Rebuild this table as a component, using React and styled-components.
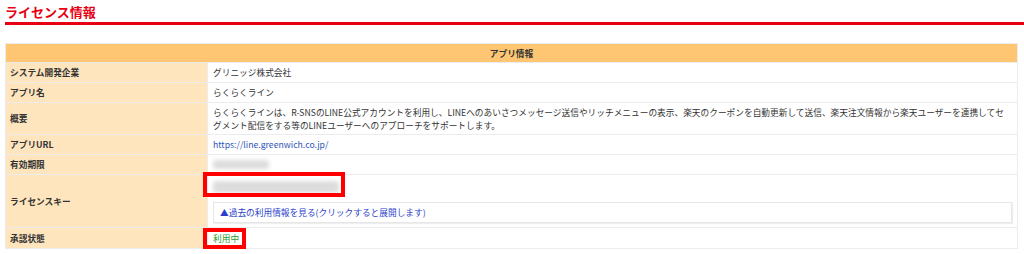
import React from 'react';
import styled, { createGlobalStyle } from 'styled-components';

const GlobalStyle = createGlobalStyle`
  body {
    margin: 0;
    background: #fff;
    font-family: "Noto Sans CJK JP", "Noto Sans", sans-serif;
    color: #333;
  }
`;

const Page = styled.div`
  width: 1024px;
  height: 254px;
  padding: 5px 0 0 5px;
  box-sizing: border-box;
  overflow: hidden;
`;

const Title = styled.h2`
  margin: 0;
  height: 17px;
  padding-bottom: 0;
  font-size: 13px;
  line-height: 14px;
  font-weight: bold;
  color: #e60012;
  border-bottom: 3px solid #e60012;
`;

const Table = styled.div`
  margin-top: 18px;
  width: 1013px;
  display: grid;
  grid-template-columns: 201px 1fr;
  gap: 1px;
  padding: 1px;
  box-sizing: border-box;
  background: #ececec;
  font-size: 8.7px;
  line-height: 13px;
`;

const Header = styled.div`
  grid-column: 1 / 3;
  height: 18px;
  background: #fec673;
  font-weight: bold;
  text-align: center;
  display: flex;
  align-items: center;
  justify-content: center;
`;

const Label = styled.div`
  background: #fee5bd;
  font-weight: bold;
  padding: 0 4px;
  min-height: ${p => p.h || 19}px;
  display: flex;
  align-items: center;
`;

const Value = styled.div`
  position: relative;
  background: #fff;
  padding: 0 5px;
  min-height: ${p => p.h || 19}px;
  display: flex;
  flex-direction: column;
  justify-content: center;
  color: ${p => p.color || '#333'};
`;

const Link = styled.a`
  color: #2c56b8;
  text-decoration: none;
`;

const Blur = styled.div`
  width: ${p => p.w}px;
  height: ${p => p.h}px;
  background: #dcdcdc;
  filter: blur(2px);
  border-radius: 3px;
`;

const KeyWrap = styled.div`
  padding-top: 5px;
`;

const History = styled.div`
  margin-top: 9px;
  margin-bottom: 3px;
  height: 19px;
  border: 1px solid #e6e6e6;
  box-shadow: 1px 1px 1px #eee;
  padding: 0 6px;
  display: flex;
  align-items: center;
  color: #2c3fcc;
  cursor: pointer;
`;

const Marker = styled.div`
  position: absolute;
  left: -5px;
  top: ${p => p.top}px;
  width: ${p => p.w}px;
  height: ${p => p.h}px;
  border: 4px solid #ff0000;
  box-sizing: border-box;
`;

export default function App() {
  return (
    <Page>
      <GlobalStyle />
      <Title>ライセンス情報</Title>
      <Table>
        <Header>アプリ情報</Header>

        <Label>システム開発企業</Label>
        <Value>グリニッジ株式会社</Value>

        <Label>アプリ名</Label>
        <Value>らくらくライン</Value>

        <Label h={31}>概要</Label>
        <Value h={31}>
          <div>
            らくらくラインは、R-SNSのLINE公式アカウントを利用し、LINEへのあいさつメッセージ送信やリッチメニューの表示、楽天のクーポンを自動更新して送信、楽天注文情報から楽天ユーザーを連携してセグメント配信をする等のLINEユーザーへのアプローチをサポートします。
          </div>
        </Value>

        <Label>アプリURL</Label>
        <Value>
          <Link href="#">https://line.greenwich.co.jp/</Link>
        </Value>

        <Label>有効期限</Label>
        <Value>
          <Blur w={56} h={9} />
        </Value>

        <Label h={52}>ライセンスキー</Label>
        <Value h={52}>
          <KeyWrap>
            <Blur w={126} h={12} />
          </KeyWrap>
          <History>▲過去の利用情報を見る(クリックすると展開します)</History>
          <Marker top={-3} w={142} h={25} />
        </Value>

        <Label h={20}>承認状態</Label>
        <Value h={20} color="#2e9a2e">
          利用中
          <Marker top={0} w={43} h={21} />
        </Value>
      </Table>
    </Page>
  );
}
